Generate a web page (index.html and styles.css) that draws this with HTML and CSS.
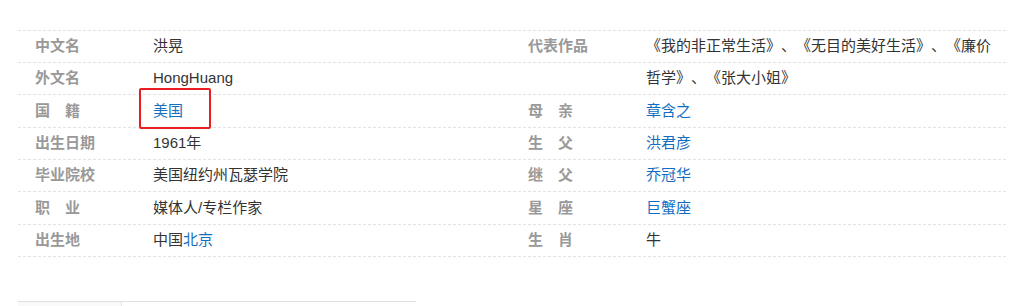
FILE: index.html
```html
<!DOCTYPE html>
<html lang="zh-CN">
<head>
<meta charset="utf-8">
<title>洪晃</title>
<link rel="stylesheet" href="styles.css">
</head>
<body>
<div class="page">
  <div class="basic-info">
    <dl class="info-block">
      <div class="info-item"><dt>中文名</dt><dd>洪晃</dd></div>
      <div class="info-item"><dt>外文名</dt><dd>HongHuang</dd></div>
      <div class="info-item"><dt>国　籍</dt><dd class="marked"><a href="#">美国</a><span class="mark"></span></dd></div>
      <div class="info-item"><dt>出生日期</dt><dd>1961年</dd></div>
      <div class="info-item"><dt>毕业院校</dt><dd>美国纽约州瓦瑟学院</dd></div>
      <div class="info-item"><dt>职　业</dt><dd>媒体人/专栏作家</dd></div>
      <div class="info-item"><dt>出生地</dt><dd>中国<a href="#">北京</a></dd></div>
    </dl>
    <dl class="info-block info-block-right">
      <div class="info-item"><dt>代表作品</dt><dd>《我的非正常生活》、《无目的美好生活》、《廉价哲学》、《张大小姐》</dd></div>
      <div class="info-item"><dt>母　亲</dt><dd><a href="#">章含之</a></dd></div>
      <div class="info-item"><dt>生　父</dt><dd><a href="#">洪君彦</a></dd></div>
      <div class="info-item"><dt>继　父</dt><dd><a href="#">乔冠华</a></dd></div>
      <div class="info-item"><dt>星　座</dt><dd><a href="#">巨蟹座</a></dd></div>
      <div class="info-item"><dt>生　肖</dt><dd>牛</dd></div>
    </dl>
  </div>
  <div class="tabs">
    <div class="tab tab-current"></div>
    <div class="tab"></div>
  </div>
</div>
</body>
</html>
```

FILE: styles.css
```css
html, body {
  margin: 0;
  padding: 0;
  background: #fff;
}

body {
  font-family: "Liberation Sans", "Noto Sans CJK SC", sans-serif;
  font-size: 15px;
  color: #333;
  text-spacing-trim: space-all;
}

.page {
  padding: 30px 22px 0 18px;
  height: 276px;
  overflow: hidden;
}

/* dotted rules repeat behind both columns, one every row */
.basic-info {
  display: flex;
  padding-bottom: 1px;
  background-color: #fff;
  background-image:
    linear-gradient(to bottom,
      transparent 0, transparent 1px,
      #fff 1px, #fff 32px,
      transparent 32px, transparent 33px,
      #fff 33px, #fff 64px,
      transparent 64px, transparent 65px,
      #fff 65px),
    linear-gradient(to right, #e2e2e2 0, #e2e2e2 3px, transparent 3px);
  background-size: 100% 97px, 5px 100%;
  background-repeat: repeat, repeat;
}

.info-block {
  margin: 0;
  width: 493px;
}

.info-block-right {
  width: 496px;
}

.info-item {
  display: flex;
  align-items: flex-start;
  line-height: 32.333px;
}

.info-item dt {
  flex: none;
  width: 118px;
  padding-left: 17px;
  font-weight: 700;
  color: #999;
  white-space: nowrap;
}

.info-item dd {
  margin: 0;
  width: 340px;
}

.info-block-right .info-item dd {
  width: 352px;
}

.info-item a {
  color: #136ec2;
  text-decoration: none;
}

.marked {
  position: relative;
}

/* red highlight frame around the nationality value */
.mark {
  position: absolute;
  left: -14px;
  top: -7px;
  width: 68px;
  height: 37px;
  border: 2px solid #ea1d22;
  border-radius: 2px;
  pointer-events: none;
}

.tabs {
  display: flex;
  width: 398px;
  margin-top: 44px;
  border-top: 1px solid #e0e0e0;
}

.tab {
  height: 40px;
}

.tab-current {
  width: 103px;
  background: #f9f9f9;
  border-right: 1px solid #e6e6e6;
}
```
